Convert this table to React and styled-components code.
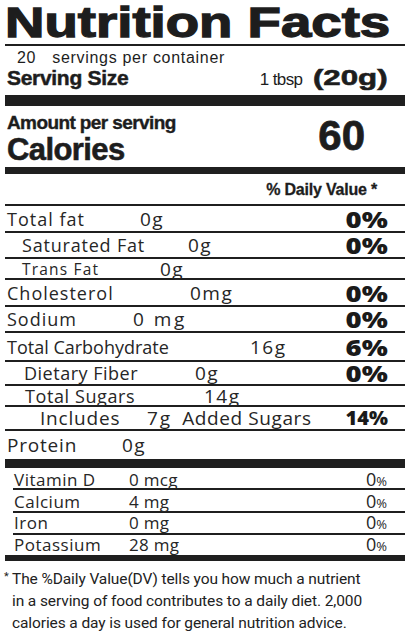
import React from "react";
import styled, { createGlobalStyle } from "styled-components";

const GlobalStyle = createGlobalStyle`
  html, body {
    margin: 0;
    background: #fff;
  }
  body {
    color: #1d1d1d;
  }
`;

const INK = "#1f1f1f";

const Panel = styled.div`
  width: 412px;
  box-sizing: border-box;
  padding: 0 7px 0 5px;
`;

const Stretch = styled.span`
  display: inline-block;
  white-space: nowrap;
  transform: scaleX(${p => p.$x});
  transform-origin: ${p => p.$origin || "left"} center;
`;

const Title = styled.h1`
  margin: 0;
  height: 46px;
  box-sizing: border-box;
  padding-top: 2px;
  border-bottom: 2px solid ${INK};
  font: bold 42px/42px "Liberation Sans", Arial, sans-serif;
  -webkit-text-stroke: 1.3px ${INK};
  white-space: nowrap;
`;

const ServingsLine = styled.div`
  padding: 1px 0 0 12px;
  font: 16px/21px "Liberation Sans", Arial, sans-serif;
  letter-spacing: 0.7px;
  white-space: nowrap;
`;

const Count = styled.span`
  margin-right: 16px;
`;

const ServingSize = styled.div`
  display: flex;
  justify-content: space-between;
  align-items: baseline;
  line-height: 20px;
  height: 27px;
  white-space: nowrap;
`;

const ServingLabel = styled.span`
  font: bold 21px/20px "Liberation Sans", Arial, sans-serif;
  -webkit-text-stroke: 0.5px ${INK};
  letter-spacing: -0.3px;
  padding-left: 2px;
`;

const ServingAmount = styled.span`
  margin-right: 17px;
`;

const Household = styled.span`
  font: 17px/20px "Liberation Sans", Arial, sans-serif;
  letter-spacing: -0.6px;
  margin-right: 33px;
`;

const Grams = styled(Stretch)`
  font: bold 22px/20px "Liberation Sans", Arial, sans-serif;
  -webkit-text-stroke: 0.6px ${INK};
`;

const Bar = styled.div`
  height: ${p => p.$h}px;
  background: ${INK};
  margin-left: ${p => p.$inset || 0}px;
`;

const CaloriesBlock = styled.div`
  display: flex;
  justify-content: space-between;
  align-items: flex-start;
  height: 61px;
  white-space: nowrap;
  font-family: "Liberation Sans", Arial, sans-serif;
  font-weight: bold;
`;

const CaloriesLeft = styled.div`
  padding: 7px 0 0 2px;
`;

const AmountPer = styled.div`
  font-size: 19px;
  line-height: 20px;
  letter-spacing: -0.6px;
  -webkit-text-stroke: 0.4px ${INK};
`;

const CaloriesWord = styled.div`
  font-size: 31px;
  line-height: 33px;
  letter-spacing: -0.6px;
  -webkit-text-stroke: 0.6px ${INK};
`;

const CaloriesValue = styled.div`
  font-size: 42px;
  line-height: 42px;
  margin: 9px 40px 0 0;
  -webkit-text-stroke: 0.8px ${INK};
`;

const DailyHead = styled.div`
  height: 32px;
  box-sizing: border-box;
  padding: 6px 28px 0 0;
  border-bottom: 2px solid ${INK};
  text-align: right;
  font: bold 16px/20px "Liberation Sans", Arial, sans-serif;
  letter-spacing: -0.2px;
  -webkit-text-stroke: 0.3px ${INK};
`;

const Row = styled.div`
  display: flex;
  align-items: center;
  height: ${p => p.$h}px;
  box-sizing: border-box;
  padding: ${p => p.$nudge || 0}px 0 0 ${p => p.$indent}px;
  margin-left: ${p => p.$inset || 0}px;
  border-bottom: ${p => (p.$last ? "none" : `2px solid ${INK}`)};
  font-family: "Open Sans", sans-serif;
  line-height: 18px;
  color: #262626;
  white-space: nowrap;
`;

const Name = styled.span`
  flex: none;
  width: ${p => p.$w}px;
  font-size: ${p => p.$size || 18}px;
  letter-spacing: ${p => (p.$ls === undefined ? 1 : p.$ls)}px;
`;

const Amount = styled.span`
  font-size: ${p => p.$size || 19}px;
  letter-spacing: ${p => (p.$ls === undefined ? 1.5 : p.$ls)}px;
`;

const AddedWord = styled.span`
  margin-left: 10px;
  font-size: 19px;
  letter-spacing: 0.6px;
`;

const Percent = styled.span`
  margin-left: auto;
  margin-right: 17px;
  font-weight: 800;
  font-size: ${p => (p.$wide ? 22 : 20)}px;
  color: #1a1a1a;
`;

const VitPercent = styled.span`
  margin-left: auto;
  margin-right: 18px;
  font-size: 18px;
`;

const SmallPct = styled.span`
  font-size: 13px;
`;

const Footnote = styled.p`
  margin: 0;
  padding: 5px 0 0 7px;
  font: 15.5px/22px Roboto, "Open Sans", sans-serif;
  letter-spacing: -0.1px;
  color: #222;
  white-space: nowrap;
`;

const Star = styled.span`
  display: inline-block;
  width: 7px;
  margin-left: -8px;
  margin-right: 1px;
  font-size: 11px;
  vertical-align: 4px;
`;

const nutrients = [
  { name: "Total fat", indent: 2, at: 140, amount: "0g", dv: "0%", h: 27 },
  { name: "Saturated Fat", indent: 17, at: 188, amount: "0g", dv: "0%", h: 26, ls: 0.8 },
  { name: "Trans Fat", indent: 17, at: 160, amount: "0g", h: 21, size: 15.5, ls: 1.2 },
  { name: "Cholesterol", indent: 2, at: 190, amount: "0mg", dv: "0%", h: 27 },
  { name: "Sodium", indent: 2, at: 133, amount: "0 mg", dv: "0%", h: 26, amountLs: 2.5 },
  { name: "Total Carbohydrate", indent: 2, at: 250, amount: "16g", dv: "6%", h: 29, ls: 0 },
  { name: "Dietary Fiber", indent: 19, at: 195, amount: "0g", dv: "0%", h: 24, ls: 0.5 },
  { name: "Total Sugars", indent: 20, at: 204, amount: "14g", h: 21, nudge: 1, ls: 0.6 }
];

const vitamins = [
  { name: "Vitamin D", amount: "0 mcg", h: 22, nudge: 3 },
  { name: "Calcium", amount: "4 mg", h: 23, nudge: 2 },
  { name: "Iron", amount: "0 mg", h: 22 },
  { name: "Potassium", amount: "28 mg", h: 20, last: true }
];

function NutrientRow({ item }) {
  return (
    <Row $h={item.h} $indent={item.indent} $nudge={item.nudge}>
      <Name $w={item.at - 5 - item.indent} $size={item.size} $ls={item.ls}>
        {item.name}
      </Name>
      <Amount $ls={item.amountLs}>{item.amount}</Amount>
      {item.dv && (
        <Percent $wide>
          <Stretch $x={1.25} $origin="right">
            {item.dv}
          </Stretch>
        </Percent>
      )}
    </Row>
  );
}

export default function App() {
  return (
    <>
      <GlobalStyle />
      <Panel>
        <Title>
          <Stretch $x={1.3}>Nutrition Facts</Stretch>
        </Title>

        <ServingsLine>
          <Count>20</Count>servings per container
        </ServingsLine>

        <ServingSize>
          <ServingLabel>Serving Size</ServingLabel>
          <ServingAmount>
            <Household>1 tbsp</Household>
            <Grams $x={1.42} $origin="right">
              (20g)
            </Grams>
          </ServingAmount>
        </ServingSize>

        <Bar $h={11} />

        <CaloriesBlock>
          <CaloriesLeft>
            <AmountPer>Amount per serving</AmountPer>
            <CaloriesWord>Calories</CaloriesWord>
          </CaloriesLeft>
          <CaloriesValue>60</CaloriesValue>
        </CaloriesBlock>

        <Bar $h={7} />

        <DailyHead>% Daily Value *</DailyHead>

        {nutrients.map(item => (
          <NutrientRow key={item.name} item={item} />
        ))}

        <Row $h={24} $indent={35}>
          <Name $w={147 - 5 - 35} $size={19} $ls={0.8}>
            Includes
          </Name>
          <Amount $ls={2}>7g</Amount>
          <AddedWord>Added Sugars</AddedWord>
          <Percent>14%</Percent>
        </Row>

        <Row $h={28} $indent={2} $last>
          <Name $w={122 - 7} $size={19} $ls={0.8}>
            Protein
          </Name>
          <Amount>0g</Amount>
        </Row>

        <Bar $h={9} />

        {vitamins.map(v => (
          <Row key={v.name} $h={v.h} $indent={1} $inset={8} $nudge={v.nudge} $last={v.last}>
            <Name $w={129 - 14} $size={17} $ls={0.5}>
              {v.name}
            </Name>
            <Amount $size={17} $ls={0.3}>
              {v.amount}
            </Amount>
            <VitPercent>
              0<SmallPct>%</SmallPct>
            </VitPercent>
          </Row>
        ))}

        <Bar $h={6} />

        <Footnote>
          <Star>*</Star>The %Daily Value(DV) tells you how much a nutrient
          <br />
          in a serving of food contributes to a daily diet. 2,000
          <br />
          calories a day is used for general nutrition advice.
        </Footnote>
      </Panel>
    </>
  );
}
